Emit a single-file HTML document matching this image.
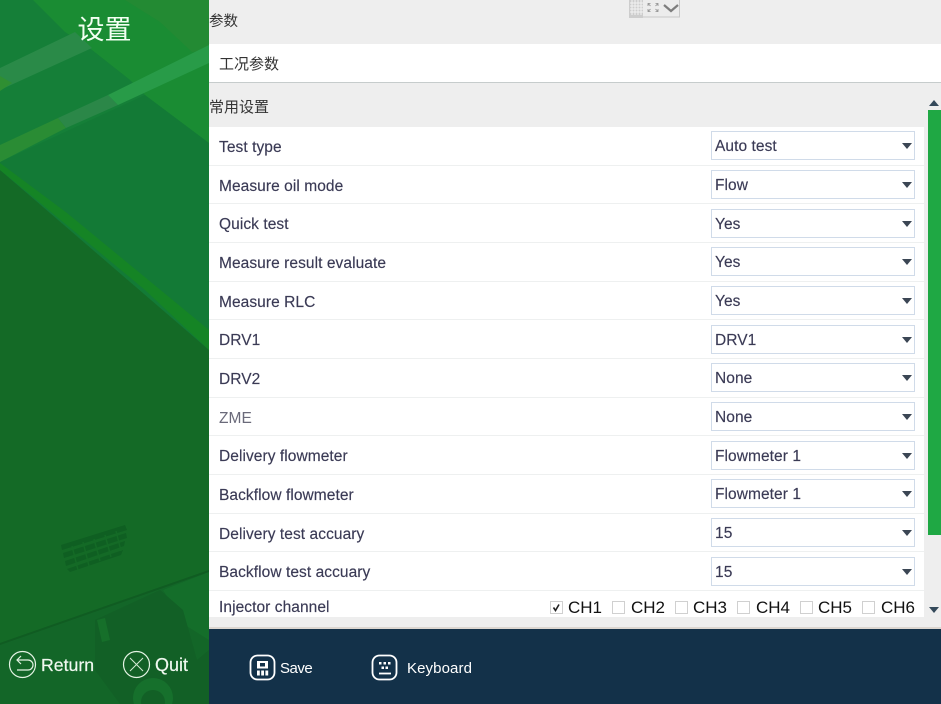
<!DOCTYPE html>
<html><head><meta charset="utf-8">
<style>
html,body{margin:0;padding:0}
body{width:941px;height:704px;overflow:hidden;position:relative;background:#eeeeee;font-family:"Liberation Sans","Noto Sans CJK SC",sans-serif;color:#33334d}
.abs{position:absolute}
#left{left:0;top:0;width:209px;height:704px;overflow:hidden}
#title{left:0;top:10px;width:209px;text-align:center;font-size:27px;line-height:36px;color:#f2fff2;font-family:"Noto Sans CJK SC",sans-serif}
.h{left:209px;font-size:14.500px;line-height:20px;color:#333;font-family:"Noto Sans CJK SC",sans-serif}
.row{position:absolute;left:209px;width:715px;box-sizing:border-box;background:#fff;border-bottom:1px solid #eef0f0}
.row .l{position:absolute;left:10px;top:2px;line-height:38px;font-size:15.500px;letter-spacing:.07px;color:#3a3a55;white-space:nowrap;-webkit-text-stroke:.15px #3a3a55}
.sel{position:absolute;left:502px;top:4px;width:202px;height:27px;border:1px solid #d0dbe9;background:#fff}
.t5 .sel{top:5px}
.sel span{position:absolute;left:3px;top:0;line-height:29px;font-size:15.500px;letter-spacing:.07px;color:#3a3a55;white-space:nowrap;-webkit-text-stroke:.15px #3a3a55}
.sel i{position:absolute;right:2px;top:11px;width:0;height:0;border-left:5.500px solid transparent;border-right:5.500px solid transparent;border-top:6px solid #3b4654}
.cb{position:absolute;top:601px;width:11px;height:11px;border:1px solid #d0d0d0;background:#fff}
.ch{position:absolute;top:597px;line-height:22px;font-size:17px;color:#111}
.f{position:absolute;color:#fff;white-space:nowrap}
</style></head><body>

<div id="left" class="abs">
<svg width="209" height="704" viewBox="0 0 209 704" style="display:block">
<rect width="209" height="704" fill="#146a26"/>
<polygon points="0,0 209,0 209,350 0,170" fill="#137a36"/>
<polygon points="0,0 33,0 65,32 92,50 130,80 145,95 0,162" fill="#157f38"/>
<polygon points="33,0 209,0 209,143 145,95 130,80 92,50 65,32" fill="#1a8c33"/>
<polygon points="125,0 209,0 209,50 192,52 160,22" fill="#238a33"/>
<polygon points="0,163 67,213 209,330 209,350 145,290 33,197 0,170" fill="#158425"/>
<polygon points="0,68 75,32 92,48 0,90" fill="#2a8a48"/>
<polygon points="0,76 12,83 0,91" fill="#2f8f32"/>
<polygon points="0,145 58,118 66,128 0,162" fill="#2a8c34"/>
<polygon points="58,118 108,95 118,105 66,128" fill="#2b8748"/>
<polygon points="108,95 209,45 209,63 118,105" fill="#289b48"/>
<polygon points="0,643 209,570 209,704 0,704" fill="#136628"/>
<polygon points="0,643 209,570 209,572 0,645" fill="#105c22"/>
<polygon points="163,590 209,572 209,640 185,625" fill="#146e2a"/>
<polygon points="95,620 160,590 183,610 197,660 209,650 209,704 120,704 95,670" fill="#126026"/>
<polygon points="97,620 105,618 110,640 102,642" fill="#166f2a"/>
<g fill="#0f5f22">
<polygon points="61,545 125,525 127,530 62,550"/><polygon points="63,553 126,533 127,538 64,558"/><polygon points="65,561 125,541 124,546 66,566"/><polygon points="67,569 123,550 121,555 70,572"/>
</g>
<g stroke="#146a26" stroke-width="1.500"><path d="M72 546l6 24M83 542l6 24M94 539l6 22M105 535l6 22M116 531l5 20"/></g>
<circle cx="153" cy="698" r="20" fill="#16702c"/>
<circle cx="153" cy="702" r="12" fill="#126026"/>
<g fill="none" stroke="#e4f3e4" stroke-width="1.200">
<circle cx="22.500" cy="664.500" r="13"/>
<path d="M17 660H28a5 5 0 0 1 0 10H17"/>
<path d="M21 656L17 660l4 4"/>
<circle cx="136.500" cy="664.500" r="13"/>
</g>
<path d="M130 658L143 671M143 658L130 671" fill="none" stroke="#d5ead5" stroke-width="1"/>
</svg>
</div>
<div id="title" class="abs">设置</div>
<div class="f" style="left:41px;top:654px;font-size:17.700px;line-height:22px;color:#f0f8f0;-webkit-text-stroke:.2px #f0f8f0">Return</div>
<div class="f" style="left:155px;top:654px;font-size:18px;line-height:22px;color:#f0f8f0;-webkit-text-stroke:.2px #f0f8f0">Quit</div>

<div class="abs h" style="top:11px">参数</div>
<div class="abs" style="left:209px;top:44px;width:732px;height:38px;background:#fff;border-bottom:1px solid #c6cccc"></div>
<div class="abs" style="left:219px;top:54px;font-size:15px;line-height:20px;color:#333;font-family:'Noto Sans CJK SC',sans-serif">工况参数</div>
<div class="abs h" style="top:97px;font-size:15px">常用设置</div>

<svg class="abs" style="left:629px;top:0" width="52" height="18" viewBox="0 0 52 18">
<rect x=".5" y="-1" width="50" height="18" fill="#ececec" stroke="#c8c8c8"/>
<rect x="0" y="0" width="14" height="18" fill="#cdcdcd"/>
<path d="M3 0v15M6 0v15M9 0v15M12 0v15M1 3h13M1 6h13M1 9h13M1 12h13" stroke="#f2f2f2" stroke-width="1"/>
<path d="M19 6V3.500h2.500M19 3.500l2.500 2.500M29 6V3.500h-2.500M29 3.500l-2.500 2.500M19 9v2.500h2.500M19 11.500L21.500 9M29 9v2.500h-2.500M29 11.500L26.500 9" fill="none" stroke="#8c8c8c" stroke-width=".8"/>
<path d="M35 5l7 6 7-6" fill="none" stroke="#7d7d7d" stroke-width="2.200"/>
</svg>

<div class="row" style="top:127px;height:39px"><div class="l">Test type</div><div class="sel"><span>Auto test</span><i></i></div></div>
<div class="row" style="top:166px;height:38px"><div class="l">Measure oil mode</div><div class="sel"><span>Flow</span><i></i></div></div>
<div class="row t5" style="top:204px;height:39px"><div class="l">Quick test</div><div class="sel"><span>Yes</span><i></i></div></div>
<div class="row" style="top:243px;height:39px"><div class="l">Measure result evaluate</div><div class="sel"><span>Yes</span><i></i></div></div>
<div class="row" style="top:282px;height:38px"><div class="l">Measure RLC</div><div class="sel"><span>Yes</span><i></i></div></div>
<div class="row t5" style="top:320px;height:39px"><div class="l">DRV1</div><div class="sel"><span>DRV1</span><i></i></div></div>
<div class="row" style="top:359px;height:39px"><div class="l">DRV2</div><div class="sel"><span>None</span><i></i></div></div>
<div class="row" style="top:398px;height:38px"><div class="l" style="color:#6a6a7a;-webkit-text-stroke:0">ZME</div><div class="sel"><span>None</span><i></i></div></div>
<div class="row t5" style="top:436px;height:39px"><div class="l">Delivery flowmeter</div><div class="sel"><span>Flowmeter 1</span><i></i></div></div>
<div class="row" style="top:475px;height:39px"><div class="l">Backflow flowmeter</div><div class="sel"><span>Flowmeter 1</span><i></i></div></div>
<div class="row" style="top:514px;height:38px"><div class="l">Delivery test accuary</div><div class="sel"><span>15</span><i></i></div></div>
<div class="row t5" style="top:552px;height:39px"><div class="l">Backflow test accuary</div><div class="sel"><span>15</span><i></i></div></div>
<div class="row" style="top:591px;height:26px;border:0"><div class="l" style="top:-2px">Injector channel</div></div>

<div class="cb" style="left:550px"></div>
<svg class="abs" style="left:550px;top:601px" width="13" height="13" viewBox="0 0 13 13"><path d="M3.500 6.500l2 3 3.500-6" fill="none" stroke="#222" stroke-width="1.600"/></svg>
<div class="ch" style="left:568px">CH1</div>
<div class="cb" style="left:612px"></div><div class="ch" style="left:631px">CH2</div>
<div class="cb" style="left:675px"></div><div class="ch" style="left:693px">CH3</div>
<div class="cb" style="left:737px"></div><div class="ch" style="left:756px">CH4</div>
<div class="cb" style="left:800px"></div><div class="ch" style="left:818px">CH5</div>
<div class="cb" style="left:862px"></div><div class="ch" style="left:881px">CH6</div>

<div class="abs" style="left:928px;top:110px;width:13px;height:425px;background:#1fa844"></div>
<div class="abs" style="left:929px;top:100px;width:0;height:0;border-left:5.500px solid transparent;border-right:5.500px solid transparent;border-bottom:6px solid #34495a"></div>
<div class="abs" style="left:929px;top:607px;width:0;height:0;border-left:5.500px solid transparent;border-right:5.500px solid transparent;border-top:6px solid #34495a"></div>

<div class="abs" style="left:209px;top:627px;width:732px;height:2px;background:#dcd6d0"></div>
<div class="abs" style="left:209px;top:629px;width:732px;height:75px;background:#133149"></div>
<svg class="abs" style="left:209px;top:629px" width="300" height="75" viewBox="0 0 300 75">
<rect x="41.500" y="26.500" width="24" height="24" rx="7" fill="none" stroke="#fff" stroke-width="1.800"/>
<path d="M48 32h11v7.500h-11z" fill="#fff"/><rect x="51" y="34" width="5" height="3.500" fill="#133149"/>
<path d="M48 41.500h2.800v5H48zM52.200 41.500H55v5h-2.800zM56.400 41.500h2.800v5h-2.800z" fill="#fff"/>
<rect x="163.500" y="26.500" width="24" height="24" rx="7" fill="none" stroke="#fff" stroke-width="1.800"/>
<path d="M170 33h2.500v2.500H170zM174.500 33h2.500v2.500h-2.500zM179 33h2.500v2.500H179zM172.500 37.500h2.500V40h-2.500zM176.500 37.500h2.500V40h-2.500z" fill="#fff"/>
<path d="M170 44.500h12" stroke="#fff" stroke-width="1.800"/>
</svg>
<div class="f" style="left:280px;top:659px;font-size:15px;line-height:20px;letter-spacing:-.5px">Save</div>
<div class="f" style="left:407px;top:659px;font-size:15px;line-height:20px;letter-spacing:.1px">Keyboard</div>
</body></html>
